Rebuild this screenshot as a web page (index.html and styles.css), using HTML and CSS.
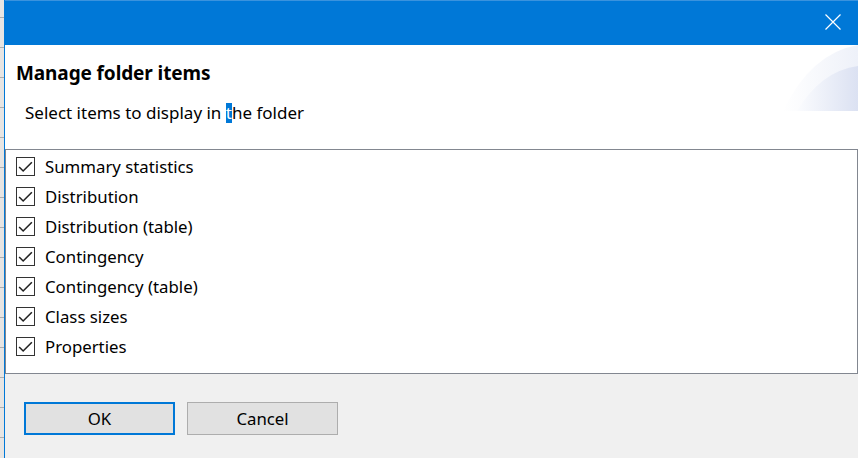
FILE: index.html
```html
<!DOCTYPE html>
<html>
<head>
<meta charset="utf-8">
<link rel="stylesheet" href="styles.css">
</head>
<body>
<div class="desk">
  <div class="strip"></div>
  <div class="window">
    <div class="titlebar">
      <svg class="close" width="16" height="16" viewBox="0 0 16 16"><path d="M0.5 0.5 L15.5 15.5 M15.5 0.5 L0.5 15.5" stroke="#fff" stroke-width="1.2" fill="none"/></svg>
    </div>
    <div class="header">
      <svg class="deco" width="75" height="66" viewBox="0 0 75 66">
        <defs>
          <linearGradient id="g1" x1="0" y1="0" x2="1" y2="0">
            <stop offset="0" stop-color="#ffffff"/>
            <stop offset="1" stop-color="#eef1f9"/>
          </linearGradient>
          <linearGradient id="g2" x1="0" y1="0" x2="1" y2="0">
            <stop offset="0" stop-color="#fbfcfe"/>
            <stop offset="1" stop-color="#dbe1f2"/>
          </linearGradient>
        </defs>
        <path d="M0 66 Q 28 8 75 0 L75 66 Z" fill="url(#g1)"/>
        <path d="M14 66 Q 38 26 75 21 L75 66 Z" fill="url(#g2)"/>
      </svg>
      <div class="title">Manage folder items</div>
      <div class="subtitle">Select items to display in <span class="sel">t</span>he folder</div>
    </div>
    <div class="list">
      <div class="row"><span class="cb"><svg width="17" height="17" viewBox="0 0 16 16"><path d="M2 8.5 L5.8 12.2 L14 4" stroke="#222" stroke-width="1.5" fill="none"/></svg></span><span>Summary statistics</span></div>
      <div class="row"><span class="cb"><svg width="17" height="17" viewBox="0 0 16 16"><path d="M2 8.5 L5.8 12.2 L14 4" stroke="#222" stroke-width="1.5" fill="none"/></svg></span><span>Distribution</span></div>
      <div class="row"><span class="cb"><svg width="17" height="17" viewBox="0 0 16 16"><path d="M2 8.5 L5.8 12.2 L14 4" stroke="#222" stroke-width="1.5" fill="none"/></svg></span><span>Distribution (table)</span></div>
      <div class="row"><span class="cb"><svg width="17" height="17" viewBox="0 0 16 16"><path d="M2 8.5 L5.8 12.2 L14 4" stroke="#222" stroke-width="1.5" fill="none"/></svg></span><span>Contingency</span></div>
      <div class="row"><span class="cb"><svg width="17" height="17" viewBox="0 0 16 16"><path d="M2 8.5 L5.8 12.2 L14 4" stroke="#222" stroke-width="1.5" fill="none"/></svg></span><span>Contingency (table)</span></div>
      <div class="row"><span class="cb"><svg width="17" height="17" viewBox="0 0 16 16"><path d="M2 8.5 L5.8 12.2 L14 4" stroke="#222" stroke-width="1.5" fill="none"/></svg></span><span>Class sizes</span></div>
      <div class="row"><span class="cb"><svg width="17" height="17" viewBox="0 0 16 16"><path d="M2 8.5 L5.8 12.2 L14 4" stroke="#222" stroke-width="1.5" fill="none"/></svg></span><span>Properties</span></div>
    </div>
    <div class="footer">
      <button class="btn primary">OK</button>
      <button class="btn">Cancel</button>
    </div>
  </div>
</div>
</body>
</html>
```
FILE: styles.css
```css
html, body {
  margin: 0;
  padding: 0;
  width: 858px;
  height: 458px;
  overflow: hidden;
  font-family: "Noto Sans", "Open Sans", sans-serif;
  color: #000;
}
.desk {
  display: flex;
  height: 458px;
}
.strip {
  width: 4px;
  flex: none;
  background-color: #e7e5e3;
  background-image: repeating-linear-gradient(to bottom, transparent 0, transparent 17px, #aeaeae 17px, #aeaeae 18px, transparent 18px, transparent 30px);
}
.window {
  flex: 1;
  display: flex;
  flex-direction: column;
  border-left: 1px solid #0078d7;
  background: #f0f0f0;
}
.titlebar {
  height: 45px;
  flex: none;
  background: #0078d7;
  border-top: 1px solid #3a93de;
  box-sizing: border-box;
  display: flex;
  justify-content: flex-end;
  align-items: flex-start;
}
.close {
  margin-top: 13px;
  margin-right: 17px;
}
.header {
  position: relative;
  height: 104px;
  flex: none;
  background: #fff;
  box-sizing: border-box;
  padding: 14px 0 0 11px;
}
.deco {
  position: absolute;
  right: 0;
  top: 0;
}
.title {
  position: relative;
  font-weight: bold;
  font-size: 19px;
  line-height: 28px;
  letter-spacing: -0.1px;
}
.subtitle {
  position: relative;
  font-size: 17px;
  line-height: 20px;
  margin-top: 16px;
  margin-left: 9px;
}
.sel {
  display: inline-block;
  background: #0078d7;
  color: #fff;
  line-height: 20px;
}
.list {
  height: 225px;
  flex: none;
  box-sizing: border-box;
  border: 1px solid #828790;
  background: #fff;
  padding-top: 1px;
}
.row {
  height: 30px;
  display: flex;
  align-items: center;
  font-size: 16.8px;
  padding-left: 10px;
}
.cb {
  width: 19px;
  height: 19px;
  box-sizing: border-box;
  border: 1px solid #333;
  display: flex;
  align-items: center;
  justify-content: center;
  margin-right: 10px;
  flex: none;
}
.footer {
  flex: 1;
  display: flex;
  gap: 12px;
  padding: 28px 0 0 19px;
  align-items: flex-start;
}
.btn {
  width: 151px;
  height: 33px;
  box-sizing: border-box;
  background: #e1e1e1;
  border: 1px solid #adadad;
  font-family: "Noto Sans", "Open Sans", sans-serif;
  font-size: 16.8px;
  color: #000;
  padding: 0;
  margin: 0;
}
.btn.primary {
  border: 2px solid #0078d7;
}
```
